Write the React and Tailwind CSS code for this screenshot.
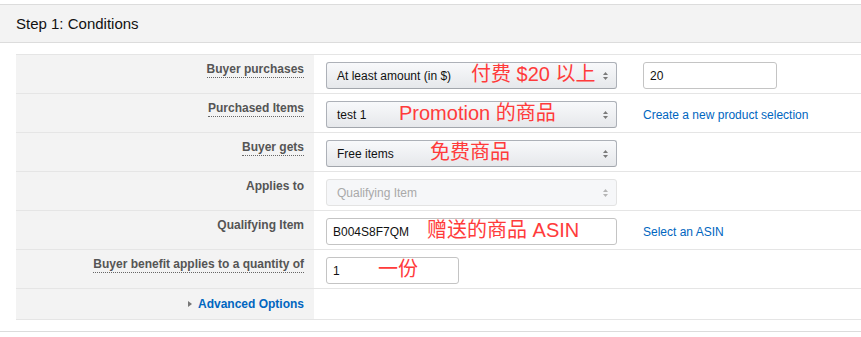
import React from "react";

const font = "font-['Liberation_Sans','Noto_Sans_CJK_SC',Arial,sans-serif]";

// Pequeñas flechas arriba/abajo del select
const Arrows = ({ disabled }) => (
  <svg width="5" height="9" viewBox="0 0 5 9" className="absolute right-[8px] top-1/2 -translate-y-1/2">
    <path d="M0 3.5 L2.5 0.5 L5 3.5 Z" fill={disabled ? "#b5b5b5" : "#7a7a7a"} />
    <path d="M0 5.5 L2.5 8.5 L5 5.5 Z" fill={disabled ? "#b5b5b5" : "#7a7a7a"} />
  </svg>
);

const Note = ({ left, children }) => (
  <span
    className="absolute top-1/2 -translate-y-[58%] text-[20px] leading-none text-[#ff3b3b] whitespace-nowrap font-['Liberation_Sans','Noto_Sans_CJK_SC',sans-serif]"
    style={{ left }}
  >
    {children}
  </span>
);

const Select = ({ value, note, noteLeft, disabled }) => (
  <div
    className={
      "relative w-[291px] h-[27px] rounded-[3px] border flex items-center pl-[10px] text-[12px] " +
      (disabled
        ? "border-[#e3e3e3] bg-[#f6f7f9] text-[#a9a9a9]"
        : "border-[#adb1b8] border-b-[#a2a6ac] bg-gradient-to-b from-[#f8f9fb] to-[#e6e8eb] text-[#111]")
    }
  >
    {value}
    {note && <Note left={noteLeft}>{note}</Note>}
    <Arrows disabled={disabled} />
  </div>
);

const Input = ({ value, width, note, noteLeft }) => (
  <div
    className={`relative h-[27px] rounded-[3px] border border-[#c4c4c4] bg-white flex items-center pl-[6px] text-[12px] text-[#111] ${width}`}
  >
    {value}
    {note && <Note left={noteLeft}>{note}</Note>}
  </div>
);

const Label = ({ children, dotted }) => (
  <span
    className={
      "text-[12px] font-bold text-[#555] leading-[14px] " +
      (dotted ? "border-b border-dotted border-[#666] pb-[1px]" : "")
    }
  >
    {children}
  </span>
);

const Row = ({ label, dotted, children }) => (
  <div className="grid grid-cols-[298px_1fr] h-[39px] border-b border-[#e5e5e5]">
    <div className="bg-[#f3f3f3] flex justify-end items-start pt-[7px] pr-[10px]">
      <Label dotted={dotted}>{label}</Label>
    </div>
    <div className="flex items-start pt-[7px] pl-[12px] gap-[26px]">{children}</div>
  </div>
);

const Link = ({ children }) => (
  <span className="text-[12px] text-[#0066c0] h-[27px] flex items-center">{children}</span>
);

export default function App() {
  return (
    <div className={`w-[861px] h-[337px] bg-white pt-[4px] overflow-hidden ${font}`}>
      <div className="h-[39px] border-y border-[#dcdcdc] bg-[#f3f3f3] flex items-center px-4 pt-[2px] text-[15px] text-[#111]">
        Step 1: Conditions
      </div>

      <div className="ml-4 mt-[11px] border-t border-[#e5e5e5]">
        <Row label="Buyer purchases" dotted>
          <Select value="At least amount (in $)" note="付费 $20 以上" noteLeft="144px" />
          <Input value="20" width="w-[134px]" />
        </Row>
        <Row label="Purchased Items" dotted>
          <Select value="test 1" note="Promotion 的商品" noteLeft="72px" />
          <Link>Create a new product selection</Link>
        </Row>
        <Row label="Buyer gets" dotted>
          <Select value="Free items" note="免费商品" noteLeft="103px" />
        </Row>
        <Row label="Applies to">
          <Select value="Qualifying Item" disabled />
        </Row>
        <Row label="Qualifying Item">
          <Input value="B004S8F7QM" width="w-[291px]" note="赠送的商品 ASIN" noteLeft="100px" />
          <Link>Select an ASIN</Link>
        </Row>
        <Row label="Buyer benefit applies to a quantity of" dotted>
          <Input value="1" width="w-[133px]" note="一份" noteLeft="51px" />
        </Row>
        <div className="grid grid-cols-[298px_1fr] h-[31px] border-b border-[#e5e5e5]">
          <div className="bg-[#f3f3f3] flex justify-end items-center pr-[10px] gap-[6px]">
            <svg width="4" height="6" viewBox="0 0 4 6">
              <path d="M0 0 L4 3 L0 6 Z" fill="#777" />
            </svg>
            <span className="text-[12px] font-bold text-[#0066c0]">Advanced Options</span>
          </div>
          <div />
        </div>
      </div>

      <div className="mt-[11px] border-t border-[#dcdcdc]" />
    </div>
  );
}
